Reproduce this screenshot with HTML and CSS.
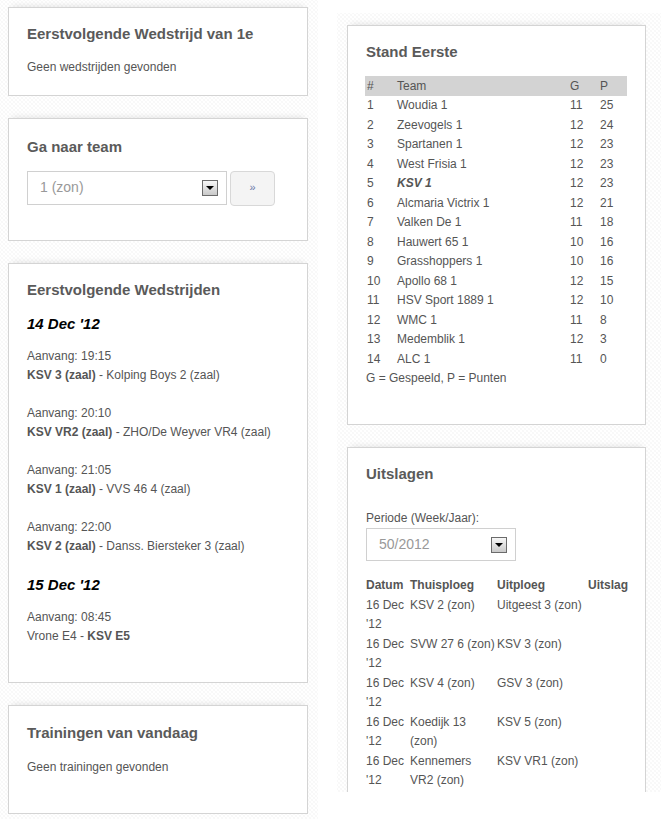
FILE: index.html
```html
<!DOCTYPE html>
<html lang="nl">
<head>
<meta charset="utf-8">
<title>KSV</title>
<link rel="stylesheet" href="styles.css">
</head>
<body>
<div class="page">
  <div class="col col-left">
    <div class="box">
      <h2 class="box-title">Eerstvolgende Wedstrijd van 1e</h2>
      <div class="plain">Geen wedstrijden gevonden</div>
    </div>

    <div class="box box-team">
      <h2 class="box-title">Ga naar team</h2>
      <div class="team-form">
        <div class="select select-team">
          <span class="select-value">1 (zon)</span>
          <span class="select-arrow"><span class="tri"></span></span>
        </div>
        <div class="go-btn">»</div>
      </div>
    </div>

    <div class="box">
      <h2 class="box-title">Eerstvolgende Wedstrijden</h2>
      <h3 class="date">14 Dec '12</h3>
      <p class="match">Aanvang: 19:15<br><b>KSV 3 (zaal)</b> - Kolping Boys 2 (zaal)</p>
      <p class="match">Aanvang: 20:10<br><b>KSV VR2 (zaal)</b> - ZHO/De Weyver VR4 (zaal)</p>
      <p class="match">Aanvang: 21:05<br><b>KSV 1 (zaal)</b> - VVS 46 4 (zaal)</p>
      <p class="match">Aanvang: 22:00<br><b>KSV 2 (zaal)</b> - Danss. Biersteker 3 (zaal)</p>
      <h3 class="date">15 Dec '12</h3>
      <p class="match">Aanvang: 08:45<br>Vrone E4 - <b>KSV E5</b></p>
    </div>

    <div class="box box-training">
      <h2 class="box-title">Trainingen van vandaag</h2>
      <p class="match">Geen trainingen gevonden</p>
    </div>
  </div>

  <div class="col col-right">
    <div class="box">
      <h2 class="box-title">Stand Eerste</h2>
      <table class="stand">
        <colgroup><col class="c-pos"><col><col class="c-g"><col class="c-p"></colgroup>
        <thead><tr><th>#</th><th>Team</th><th>G</th><th>P</th></tr></thead>
        <tbody>
          <tr><td>1</td><td>Woudia 1</td><td>11</td><td>25</td></tr>
          <tr><td>2</td><td>Zeevogels 1</td><td>12</td><td>24</td></tr>
          <tr><td>3</td><td>Spartanen 1</td><td>12</td><td>23</td></tr>
          <tr><td>4</td><td>West Frisia 1</td><td>12</td><td>23</td></tr>
          <tr><td>5</td><td><b><i>KSV 1</i></b></td><td>12</td><td>23</td></tr>
          <tr><td>6</td><td>Alcmaria Victrix 1</td><td>12</td><td>21</td></tr>
          <tr><td>7</td><td>Valken De 1</td><td>11</td><td>18</td></tr>
          <tr><td>8</td><td>Hauwert 65 1</td><td>10</td><td>16</td></tr>
          <tr><td>9</td><td>Grasshoppers 1</td><td>10</td><td>16</td></tr>
          <tr><td>10</td><td>Apollo 68 1</td><td>12</td><td>15</td></tr>
          <tr><td>11</td><td>HSV Sport 1889 1</td><td>12</td><td>10</td></tr>
          <tr><td>12</td><td>WMC 1</td><td>11</td><td>8</td></tr>
          <tr><td>13</td><td>Medemblik 1</td><td>12</td><td>3</td></tr>
          <tr><td>14</td><td>ALC 1</td><td>11</td><td>0</td></tr>
        </tbody>
      </table>
      <p class="match">G = Gespeeld, P = Punten</p>
    </div>

    <div class="box">
      <h2 class="box-title">Uitslagen</h2>
      <div class="period-form">
        <div class="label">Periode (Week/Jaar):</div>
        <div class="select select-period">
          <span class="select-value">50/2012</span>
          <span class="select-arrow"><span class="tri"></span></span>
        </div>
      </div>
      <table class="results">
        <colgroup><col class="c-date"><col class="c-home"><col class="c-away"><col></colgroup>
        <thead><tr><th>Datum</th><th>Thuisploeg</th><th>Uitploeg</th><th>Uitslag</th></tr></thead>
        <tbody>
          <tr><td>16 Dec '12</td><td>KSV 2 (zon)</td><td>Uitgeest 3 (zon)</td><td></td></tr>
          <tr><td>16 Dec '12</td><td>SVW 27 6 (zon)</td><td>KSV 3 (zon)</td><td></td></tr>
          <tr><td>16 Dec '12</td><td>KSV 4 (zon)</td><td>GSV 3 (zon)</td><td></td></tr>
          <tr><td>16 Dec '12</td><td>Koedijk 13 (zon)</td><td>KSV 5 (zon)</td><td></td></tr>
          <tr><td>16 Dec '12</td><td>Kennemers VR2 (zon)</td><td>KSV VR1 (zon)</td><td></td></tr>
        </tbody>
      </table>
    </div>
  </div>
</div>
</body>
</html>
```

FILE: styles.css
```css
html, body {
  margin: 0;
  padding: 0;
  background: #fff;
}

body {
  font-family: "Liberation Sans", Arial, sans-serif;
  font-size: 12px;
  line-height: 19.5px;
  color: #555;
}

.page {
  display: flex;
  align-items: flex-start;
  gap: 19px;
  height: 819px;
  overflow: hidden;
}

.col {
  background-color: #fff;
  background-image:
    radial-gradient(circle, #e2e2e2 0.55px, transparent 0.75px),
    radial-gradient(circle, #e2e2e2 0.55px, transparent 0.75px);
  background-size: 4px 4px;
  background-position: 0 0, 2px 2px;
  display: flex;
  flex-direction: column;
  gap: 22px;
}

.col-left {
  width: 300px;
  padding: 7px 10px 0 8px;
  height: 812px;
}

.col-right {
  flex: 1;
  margin-top: 13px;
  padding: 12px 15px 0 10px;
  height: 767px;
  overflow: hidden;
}

.box {
  background: #fff;
  border: 1px solid #d4d4d4;
  padding: 16px 18px 17px;
  box-shadow: 0 -5px 6px -4px rgba(0, 0, 0, 0.10);
  flex-shrink: 0;
}

.box-team {
  padding-top: 18px;
  padding-bottom: 16px;
}

.box-training {
  padding-top: 17px;
}

.box-training .box-title {
  margin-bottom: 15px;
}

.box-training .match {
  margin-bottom: 19px;
}

.box-title {
  margin: 0 0 14px;
  font-size: 15px;
  line-height: 20px;
  font-weight: bold;
  color: #5a5a5a;
}

.plain {
  margin: 0;
}

.match {
  margin: 0 0 18px;
}

.date {
  margin: 0 0 13px;
  font-size: 15px;
  line-height: 20px;
  font-weight: bold;
  font-style: italic;
  color: #000;
}

.team-form {
  display: flex;
  align-items: flex-start;
  gap: 3px;
  margin-bottom: 18px;
}

.select {
  box-sizing: border-box;
  height: 34px;
  border: 1px solid #d0d0d0;
  background: #fff;
  display: flex;
  align-items: center;
  padding: 0 8px 0 12px;
  font-size: 14px;
  color: #999;
}

.select-team {
  width: 200px;
}

.select-period {
  width: 150px;
  height: 33px;
}

.select-value {
  flex: 1;
}

.select-arrow {
  box-sizing: border-box;
  width: 16px;
  height: 16px;
  border: 1px solid #6b6b6b;
  background: linear-gradient(#f7f7f7, #c9c9c9);
  display: flex;
  align-items: center;
  justify-content: center;
}

.tri {
  width: 0;
  height: 0;
  border-left: 4px solid transparent;
  border-right: 4px solid transparent;
  border-top: 4px solid #000;
  margin-top: 1px;
}

.go-btn {
  box-sizing: border-box;
  width: 45px;
  height: 35px;
  border: 1px solid #d8d8d8;
  border-radius: 4px;
  background: #f4f4f4;
  color: #6a76a8;
  font-size: 11px;
  display: flex;
  align-items: center;
  justify-content: center;
}

.stand {
  width: 262px;
  margin-left: -1px;
  border-collapse: collapse;
  border-spacing: 0;
  table-layout: fixed;
}

.stand th {
  background: #d3d3d3;
  font-weight: normal;
  text-align: left;
  line-height: 20px;
  padding: 0 0 0 2px;
}

.stand td {
  padding: 0 0 0 2px;
  text-align: left;
  color: #555;
}

.c-pos { width: 30px; }
.c-g { width: 30px; }
.c-p { width: 29px; }

.period-form {
  margin: 25px 0 15px;
}

.label {
  margin: 0;
}

.results {
  width: 260px;
  border-collapse: collapse;
  border-spacing: 0;
  table-layout: fixed;
}

.results th {
  text-align: left;
  font-weight: bold;
  padding: 0;
  white-space: nowrap;
}

.results td {
  padding: 0 2px 0 0;
  vertical-align: top;
}

.c-date { width: 44px; }
.c-home { width: 87px; }
.c-away { width: 91px; }
```
